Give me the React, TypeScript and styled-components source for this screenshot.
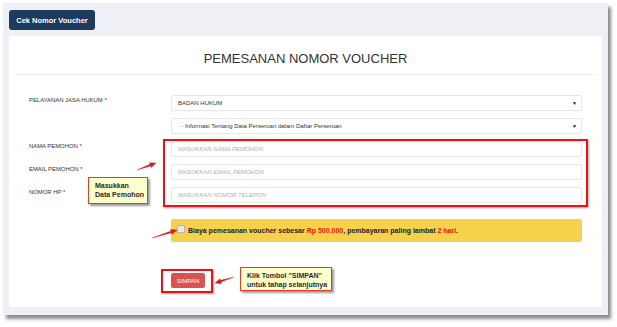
import React from 'react'
import styled, { createGlobalStyle } from 'styled-components'

const GlobalStyle = createGlobalStyle`
  html, body {
    margin: 0;
    padding: 0;
    background: #ffffff;
  }
  body {
    font-family: 'Liberation Sans', Arial, sans-serif;
    color: #333;
  }
`

const Page = styled.div`
  width: 617px;
  height: 327px;
  padding: 3px 0 0 3px;
  box-sizing: border-box;
`

const Frame = styled.div`
  width: 605px;
  height: 312px;
  box-sizing: border-box;
  background: #eff0f5;
  padding: 7px 6px 8px 6px;
  display: flex;
  flex-direction: column;
  gap: 6px;
  box-shadow: 3px 4px 3px rgba(0, 0, 0, 0.45);
`

const TopButton = styled.button`
  align-self: flex-start;
  height: 20px;
  width: 86px;
  padding: 0;
  border: none;
  border-radius: 3px;
  background: #1d3a5c;
  color: #fff;
  font-family: 'Liberation Sans', Arial, sans-serif;
  font-size: 7.5px;
  font-weight: bold;
`

const Card = styled.div`
  position: relative;
  flex: 1;
  background: #fff;
  padding: 0 7px;
`

const Header = styled.div`
  height: 39px;
  box-sizing: border-box;
  padding-top: 15px;
  border-bottom: 1px solid #eeeeee;
  text-align: center;
`

const Title = styled.h1`
  margin: 0;
  font-size: 13px;
  line-height: 15px;
  font-weight: normal;
  color: #333;
`

const Form = styled.div`
  padding: 20px 13px 0 13px;
  display: grid;
  grid-template-columns: 142px 1fr;
  row-gap: 7px;
`

const Label = styled.div<{ $offset?: number }>`
  font-size: 5.9px;
  color: #333;
  padding-top: ${(p) => p.$offset ?? 2}px;
  text-transform: uppercase;
`

const Field = styled.div<{ $col?: boolean }>`
  grid-column: ${(p) => (p.$col ? '2' : 'auto')};
  height: 16px;
  box-sizing: border-box;
  border: 1px solid #e6e6e6;
  border-radius: 2px;
  background: #fff;
  display: flex;
  align-items: center;
  justify-content: space-between;
  padding: 0 4px 0 6px;
  font-size: 6px;
  color: #333;
`

const Placeholder = styled.span`
  font-style: italic;
  color: #b0b0b0;
`

const Caret = styled.span`
  font-size: 5px;
  color: #111;
`

const Notice = styled.div`
  grid-column: 2;
  margin-top: 9px;
  height: 23px;
  box-sizing: border-box;
  border-radius: 2px;
  background: #f6d24c;
  display: flex;
  align-items: center;
  gap: 3px;
  padding-left: 6px;
  font-size: 7px;
  font-weight: bold;
  color: #222;
`

const Check = styled.span`
  width: 6px;
  height: 6px;
  border: 1px solid #b5b5b5;
  border-radius: 1px;
  background: #e8e8e8;
  margin-top: -3px;
`

const Red = styled.span`
  color: #f2140a;
`

const SubmitRow = styled.div`
  grid-column: 2;
  margin-top: 24px;
  display: flex;
`

const SaveButton = styled.button`
  height: 15px;
  width: 34px;
  padding: 0;
  border: none;
  border-radius: 2px;
  background: #d9534f;
  color: #fff;
  font-family: 'Liberation Sans', Arial, sans-serif;
  font-size: 6px;
`

const Highlight = styled.div<{ $l: number; $t: number; $w: number; $h: number }>`
  position: absolute;
  left: ${(p) => p.$l}px;
  top: ${(p) => p.$t}px;
  width: ${(p) => p.$w}px;
  height: ${(p) => p.$h}px;
  box-sizing: border-box;
  border: 2px solid #ee1111;
  box-shadow: 1px 1px 2px rgba(0, 0, 0, 0.35);
`

const Callout = styled.div<{ $l: number; $t: number; $w: number; $h: number }>`
  position: absolute;
  left: ${(p) => p.$l}px;
  top: ${(p) => p.$t}px;
  width: ${(p) => p.$w}px;
  height: ${(p) => p.$h}px;
  box-sizing: border-box;
  background: #ffffcc;
  border: 1px solid #e83a2a;
  box-shadow: 2px 2px 2px rgba(0, 0, 0, 0.4);
  padding: 3px 0 0 6px;
  font-size: 7px;
  line-height: 9px;
  font-weight: bold;
  white-space: nowrap;
  color: #2a2a2a;
`

const ArrowSvg = styled.svg`
  position: absolute;
  left: 0;
  top: 0;
  overflow: visible;
  pointer-events: none;
`

type ArrowProps = { x1: number; y1: number; x2: number; y2: number }

// tapered red arrow, tail (x1,y1) to tip (x2,y2)
const Arrow = ({ x1, y1, x2, y2 }: ArrowProps) => {
  const dx = x2 - x1
  const dy = y2 - y1
  const len = Math.hypot(dx, dy)
  const ux = dx / len
  const uy = dy / len
  const nx = -uy
  const ny = ux
  const hb = 6
  const bx = x2 - ux * hb
  const by = y2 - uy * hb
  const pts = [
    [x1, y1],
    [bx + nx * 0.9, by + ny * 0.9],
    [bx + nx * 2.6, by + ny * 2.6],
    [x2, y2],
    [bx - nx * 2.6, by - ny * 2.6],
    [bx - nx * 0.9, by - ny * 0.9],
  ]
  return (
    <ArrowSvg width="1" height="1">
      <polygon
        points={pts.map((p) => p.join(',')).join(' ')}
        fill="#e81616"
        stroke="#b00"
        strokeWidth="0.3"
      />
    </ArrowSvg>
  )
}

export default function App() {
  return (
    <>
      <GlobalStyle />
      <Page>
        <Frame>
          <TopButton>Cek Nomor Voucher</TopButton>
          <Card>
            <Header>
              <Title>PEMESANAN NOMOR VOUCHER</Title>
            </Header>
            <Form>
              <Label>Pelayanan Jasa Hukum *</Label>
              <Field>
                <span>BADAN HUKUM</span>
                <Caret>▼</Caret>
              </Field>
              <Field $col>
                <span>&nbsp;&nbsp;- Informasi Tentang Data Perseroan dalam Daftar Perseroan</span>
                <Caret>▼</Caret>
              </Field>
              <Label>Nama Pemohon *</Label>
              <Field>
                <Placeholder>MASUKKAN NAMA PEMOHON</Placeholder>
              </Field>
              <Label>Email Pemohon *</Label>
              <Field>
                <Placeholder>MASUKKAN EMAIL PEMOHON</Placeholder>
              </Field>
              <Label>Nomor HP *</Label>
              <Field>
                <Placeholder>MASUKKAN NOMOR TELEPON</Placeholder>
              </Field>
              <Notice>
                <Check />
                <span>
                  Biaya pemesanan voucher sebesar <Red>Rp 500.000</Red>, pembayaran paling lambat{' '}
                  <Red>2 hari</Red>.
                </span>
              </Notice>
              <SubmitRow>
                <SaveButton>SIMPAN</SaveButton>
              </SubmitRow>
            </Form>

            <Highlight $l={154} $t={103} $w={425} $h={68} />
            <Highlight $l={152} $t={233} $w={52} $h={24} />
            <Callout $l={79} $t={141} $w={60} $h={27}>
              Masukkan
              <br />
              Data Pemohon
            </Callout>
            <Callout $l={231} $t={231} $w={92} $h={24}>
              Klik Tombol "SIMPAN"
              <br />
              untuk tahap selanjutnya
            </Callout>
            <Arrow x1={128} y1={134} x2={147} y2={127} />
            <Arrow x1={143} y1={202} x2={168} y2={194} />
            <Arrow x1={225} y1={241} x2={206} y2={247} />
          </Card>
        </Frame>
      </Page>
    </>
  )
}
